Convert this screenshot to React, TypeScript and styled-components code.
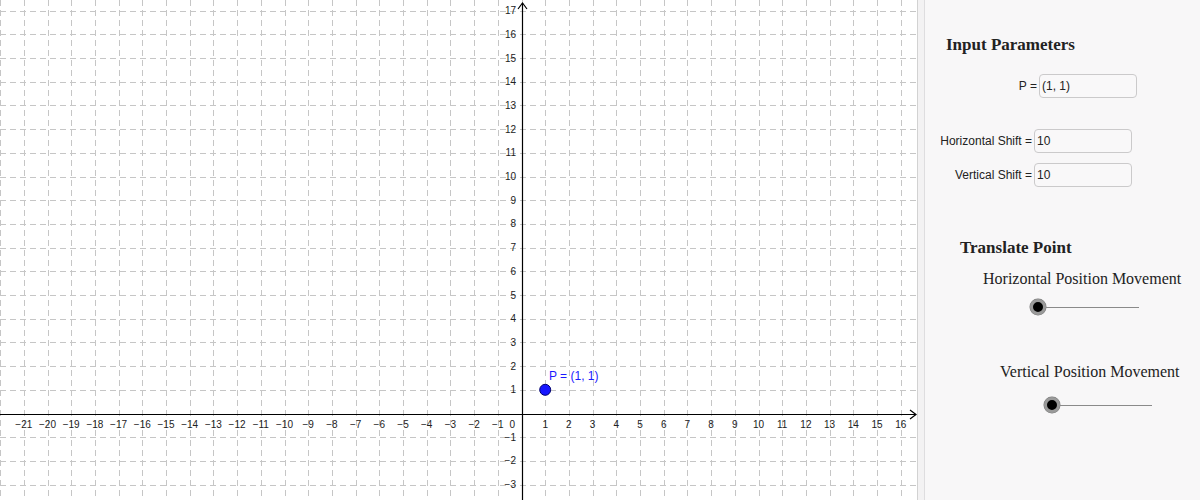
import React from "react";
import styled, { createGlobalStyle } from "styled-components";

const GlobalStyle = createGlobalStyle`
  html, body {
    margin: 0;
    padding: 0;
    overflow: hidden;
    background: #fff;
  }
`;

const UNIT = 23.7;
const OX = 521.5;
const OY = 413.5;
const VIEW_W = 917;
const VIEW_H = 500;

const Layout = styled.div`
  display: flex;
  width: 1200px;
  height: 500px;
  font-family: "Liberation Sans", Arial, sans-serif;
`;

const GraphicsView = styled.div`
  width: ${VIEW_W}px;
  height: ${VIEW_H}px;
  flex: none;
  background: #fff;

  svg {
    display: block;
  }
`;

const Divider = styled.div`
  width: 6px;
  flex: none;
  background: #f3f2f3;
  border-left: 1px solid #d2d2d2;
  border-right: 1px solid #dedddf;
`;

const Panel = styled.div`
  flex: 1;
  display: flex;
  flex-direction: column;
  background: #f8f7f8;
  color: #222;
`;

const Heading = styled.div<{ $left: number; $top: number }>`
  margin: ${(p) => p.$top}px 0 0 ${(p) => p.$left}px;
  height: 20px;
  line-height: 20px;
  font-family: "Liberation Serif", "Times New Roman", serif;
  font-weight: bold;
  font-size: 17px;
  white-space: nowrap;
`;

const Caption = styled.div<{ $left: number; $top: number }>`
  margin: ${(p) => p.$top}px 0 0 ${(p) => p.$left}px;
  height: 20px;
  line-height: 20px;
  font-family: "Liberation Serif", "Times New Roman", serif;
  font-size: 16px;
  white-space: nowrap;
`;

const FieldRow = styled.div<{ $top: number }>`
  display: flex;
  align-items: center;
  margin-top: ${(p) => p.$top}px;
  height: 24px;
`;

const FieldLabel = styled.label<{ $width: number }>`
  width: ${(p) => p.$width}px;
  flex: none;
  text-align: right;
  padding-right: 2px;
  box-sizing: border-box;
  font-size: 12px;
  white-space: nowrap;
`;

const FieldInput = styled.div`
  width: 98px;
  height: 24px;
  box-sizing: border-box;
  border: 1px solid #cbcacb;
  border-radius: 4px;
  background: #f9f8f9;
  padding-left: 2px;
  font-size: 12px;
  line-height: 22px;
  color: #222;
`;

const Slider = styled.div<{ $left: number; $top: number; $width: number }>`
  display: flex;
  align-items: center;
  margin: ${(p) => p.$top}px 0 0 ${(p) => p.$left}px;
  width: ${(p) => p.$width}px;
  height: 16px;
`;

const Knob = styled.div`
  width: 16px;
  height: 16px;
  flex: none;
  box-sizing: border-box;
  border-radius: 50%;
  background: #000;
  border: 3px solid #9a9a9a;
  box-shadow: 0 0 0 0.5px #777;
`;

const Track = styled.div`
  flex: 1;
  height: 1px;
  background: #8a8a8a;
`;

const range = (a: number, b: number) =>
  Array.from({ length: b - a + 1 }, (_, i) => a + i);

const px = (i: number) => Math.round(OX + i * UNIT) + 0.5;
const py = (j: number) => Math.round(OY - j * UNIT) + 0.5;

function Graph() {
  const xs = range(-22, 16);
  const ys = range(-4, 17);
  const axisX = Math.round(OX) + 0.5;
  const axisY = Math.round(OY) + 0.5;

  return (
    <svg width={VIEW_W} height={VIEW_H} viewBox={`0 0 ${VIEW_W} ${VIEW_H}`}>
      <g stroke="#c6c6c6" strokeWidth={1} strokeDasharray="6 4">
        {xs.map((i) => (
          <line key={`gx${i}`} x1={px(i)} y1={0} x2={px(i)} y2={VIEW_H} />
        ))}
        {ys.map((j) => (
          <line key={`gy${j}`} x1={0} y1={py(j)} x2={VIEW_W} y2={py(j)} />
        ))}
      </g>

      <g stroke="#000" strokeWidth={1.2} fill="none">
        <line x1={0} y1={axisY} x2={916} y2={axisY} />
        <polyline points={`910,${axisY - 4.5} 916,${axisY} 910,${axisY + 4.5}`} />
        <line x1={axisX} y1={VIEW_H} x2={axisX} y2={3} />
        <polyline points={`${axisX - 4.5},9 ${axisX},3 ${axisX + 4.5},9`} />
      </g>

      <g
        fontFamily="'Liberation Sans', Arial, sans-serif"
        fontSize={10}
        fill="#222"
      >
        {range(-21, 16)
          .filter((i) => i !== 0)
          .map((i) => (
            <text key={`lx${i}`} x={OX + i * UNIT} y={428} textAnchor="middle">
              {i < 0 ? `\u2212${-i}` : i}
            </text>
          ))}
        <text x={515} y={428} textAnchor="end">
          0
        </text>
        {range(-3, 17)
          .filter((j) => j !== 0)
          .map((j) => (
            <text key={`ly${j}`} x={516} y={OY - j * UNIT + 3.5} textAnchor="end">
              {j < 0 ? `\u2212${-j}` : j}
            </text>
          ))}
      </g>

      <circle
        cx={OX + UNIT}
        cy={OY - UNIT}
        r={5.5}
        fill="#1616ff"
        stroke="#00006e"
        strokeWidth={1}
      />
      <text
        x={549}
        y={380}
        fontFamily="'Liberation Sans', Arial, sans-serif"
        fontSize={12}
        fill="#1a1aff"
      >
        P = (1, 1)
      </text>
    </svg>
  );
}

export default function App() {
  return (
    <>
      <GlobalStyle />
      <Layout>
        <GraphicsView>
          <Graph />
        </GraphicsView>
        <Divider />
        <Panel>
          <Heading $left={21} $top={35}>
            Input Parameters
          </Heading>
          <FieldRow $top={19}>
            <FieldLabel $width={114}>P =</FieldLabel>
            <FieldInput>(1, 1)</FieldInput>
          </FieldRow>
          <FieldRow $top={31}>
            <FieldLabel $width={109}>Horizontal Shift =</FieldLabel>
            <FieldInput>10</FieldInput>
          </FieldRow>
          <FieldRow $top={10}>
            <FieldLabel $width={109}>Vertical Shift =</FieldLabel>
            <FieldInput>10</FieldInput>
          </FieldRow>
          <Heading $left={35} $top={51}>
            Translate Point
          </Heading>
          <Caption $left={58} $top={11}>
            Horizontal Position Movement
          </Caption>
          <Slider $left={105} $top={10} $width={109}>
            <Knob />
            <Track />
          </Slider>
          <Caption $left={75} $top={47}>
            Vertical Position Movement
          </Caption>
          <Slider $left={119} $top={15} $width={108}>
            <Knob />
            <Track />
          </Slider>
        </Panel>
      </Layout>
    </>
  );
}
